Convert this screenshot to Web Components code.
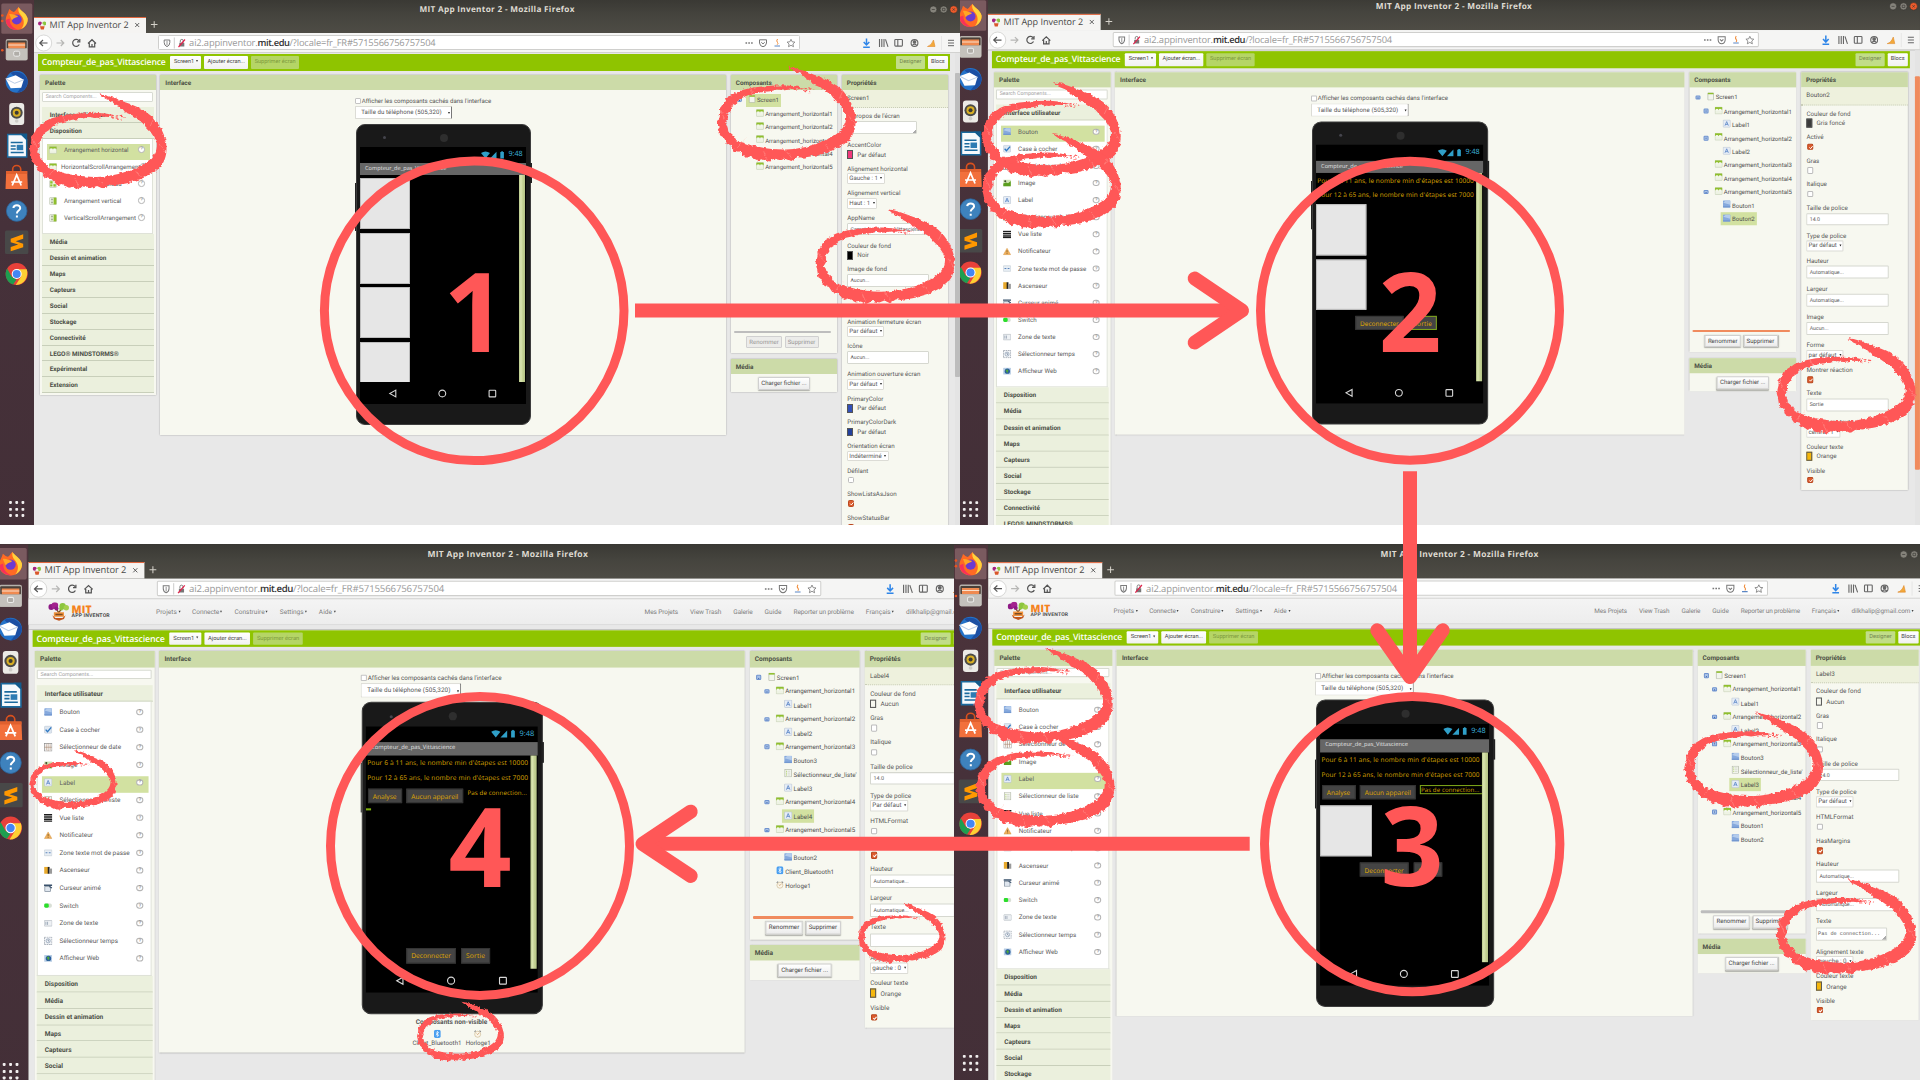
<!DOCTYPE html>
<html lang="fr">
<head>
<meta charset="utf-8">
<title>MIT App Inventor 2 - Compteur de pas</title>
<style>
html,body{margin:0;padding:0}
body{width:1920px;height:1080px;overflow:hidden;background:#fff;font-family:Roboto,"Liberation Sans",sans-serif;text-rendering:geometricPrecision}
</style>
</head>
<body>
<tutorial-board>
  <window-shot slot="top" w="960" x="0" y="0" scale="1" shot="1"></window-shot>
  <window-shot slot="top" w="960" x="-6.3" y="-3.2" scale="1.0065" shot="2"></window-shot>
  <window-shot slot="bottom" w="954" x="-6.7" y="0.4" scale="1.035" shot="4"></window-shot>
  <window-shot slot="bottom" w="966" x="-0.4" y="0.8" scale="1.018" shot="3"></window-shot>
  <step-overlay slot="over"></step-overlay>
</tutorial-board>
<script>
/* ---------- shared helpers ---------- */
const BASE = `*{box-sizing:border-box}:host{display:block;box-sizing:border-box}svg{display:block;flex:none}`;
const pen = document.createElement('canvas').getContext('2d');
// Spreads the letters of every [data-w] text so that it fills the given width.
function fit(root){
  root.querySelectorAll('[data-w]').forEach(el=>{
    const c=getComputedStyle(el);
    pen.font=`${c.fontWeight} 100px ${c.fontFamily}`;
    const nat=pen.measureText(el.textContent).width*parseFloat(c.fontSize)/100;
    el.style.letterSpacing=((+el.dataset.w-nat)/el.textContent.length).toFixed(3)+'px';
    el.style.whiteSpace='pre';
  });
}
function define(tag,css,tpl){
  customElements.define(tag,class extends HTMLElement{
    connectedCallback(){
      if(this.shadowRoot)return;
      const r=this.attachShadow({mode:'open'});
      r.innerHTML=`<style>${BASE}${css}</style>${tpl(this)}`;
      fit(r);
    }
  });
}

/* ---------- component icons (8x8) ---------- */
const G={
 harr:'<rect x=".4" y=".6" width="7.2" height="6.8" rx=".6" fill="#eef3e4" stroke="#b9c4a6" stroke-width=".5"/><rect x=".4" y=".6" width="7.2" height="2.6" fill="#8fbf2d"/><rect x="1.2" y="2.4" width="2.3" height="2" fill="#f4f7ee"/><rect x="4.4" y="2.4" width="2.3" height="2" fill="#f4f7ee"/>',
 varr:'<rect x=".6" y=".5" width="6.8" height="7" rx=".6" fill="#eef3e4" stroke="#b0b9a3" stroke-width=".5"/><rect x="4.6" y=".6" width="2.8" height="6.8" fill="#8fbf2d"/><rect x="2" y="1.6" width="2" height="1.7" fill="#a9b39a"/><rect x="2" y="4.6" width="2" height="1.7" fill="#a9b39a"/>',
 tab:'<rect x=".6" y=".5" width="6.8" height="7" rx=".6" fill="#eef3e4" stroke="#b0b9a3" stroke-width=".5"/><rect x="1.2" y="1.2" width="2.4" height="2.4" fill="#8fbf2d"/><rect x="4.4" y="4.2" width="2.4" height="2.4" fill="#8fbf2d"/><rect x="1.2" y="4.4" width="2.2" height="2" fill="#8fbf2d"/>',
 screen:'<rect x="1.3" y=".3" width="5.6" height="7.3" rx=".5" fill="#f3f5ee" stroke="#a9b09d" stroke-width=".6"/><rect x="1.3" y=".3" width="5.6" height="1.5" fill="#8fbf2d"/>',
 bouton:'<rect x=".3" y=".3" width="7.4" height="7" rx=".7" fill="#86a9dd"/><path d="M.5 2.5 3 .5h4.500v4z" fill="#b4ccec"/><rect x=".3" y="6" width="7.400" height="1.300" fill="#7398d0"/>',
 check:'<rect x=".5" y=".5" width="7" height="7" rx="1" fill="#dde6f0" stroke="#b7c3d2" stroke-width=".5"/><path d="M1.600 4 3.400 6 7 1.800" fill="none" stroke="#2e78c2" stroke-width="1.300"/>',
 date:'<rect x=".3" y=".3" width="7.400" height="7.400" fill="#fff" stroke="#8b8b8b" stroke-width=".7"/><path d="M4 .3v7.400M.3 4h7.400M2.200 1v6M5.900 1v6" stroke="#a98972" stroke-width=".6"/>',
 image:'<rect x=".3" y=".8" width="7.400" height="6.400" fill="#cfe3b4"/><path d="M.3 4.500 3 3.600 5 4.300 7.700 2v5.200H.3z" fill="#5a9e1e"/><circle cx="2.200" cy="2.200" r="1" fill="#3a4d2a"/>',
 label:'<rect x=".4" y=".4" width="7.200" height="7.200" rx=".8" fill="#e6edf6" stroke="#b4bfce" stroke-width=".6"/><path d="M2.300 6 4 2 5.700 6M2.900 4.800h2.200" fill="none" stroke="#5b86c7" stroke-width=".8"/>',
 liste:'<rect x=".8" y=".4" width="6.400" height="7.200" fill="#f4f6f0" stroke="#aab09f" stroke-width=".6"/><path d="M2 2.200h.8M2 4h.8M2 5.800h.8" stroke="#8fbf2d" stroke-width=".8"/><path d="M3.500 2.200H6M3.500 4H6M3.500 5.800H6" stroke="#c3c8ba" stroke-width=".6"/>',
 vue:'<path d="M0 1.200h8M0 3.400h8M0 5.600h8M0 7.500h8" stroke="#1c1c1c" stroke-width="1.500"/>',
 notif:'<path d="M4 .8 7.600 7.200H.4z" fill="#f0b05c" stroke="#cf8f3a" stroke-width=".4"/><path d="M4 2.800V5M4 5.600v.9" stroke="#7d5c2a" stroke-width=".8"/>',
 pass:'<rect x=".2" y="1.200" width="7.600" height="5.600" rx=".6" fill="#e8eef4" stroke="#b9c2cc" stroke-width=".5"/><path d="M1.500 4h1.800M4.600 4h1.800" stroke="#5a84bb" stroke-width="1"/>',
 asc:'<rect x=".2" y=".6" width="3.800" height="6.600" fill="#e8a92b"/><rect x="3.600" y=".6" width="1.800" height="6.600" fill="#222"/><rect x="5.400" y="2.200" width="2.400" height="5" fill="#9a9a9a"/>',
 curs:'<rect x=".8" y="2.600" width="5.600" height="4.800" fill="#dfe6ee" stroke="#6b7a8b" stroke-width=".6"/><path d="M0 1.300h8" stroke="#39506b" stroke-width="1.300"/><path d="M5 2.600 7.800 4" stroke="#39506b" stroke-width="1"/>',
 sw:'<rect x=".2" y="2" width="7.400" height="4" rx="1.600" fill="#d9dfd6"/><rect x=".2" y="2" width="4.400" height="4" rx="1.400" fill="#2ade2a"/>',
 zone:'<rect x=".2" y="1.400" width="7.600" height="5.400" rx=".5" fill="#eef1f4" stroke="#adb5bd" stroke-width=".6"/><path d="M1.800 2.600v3M3.400 2.600v3" stroke="#8796a8" stroke-width=".7"/>',
 temps:'<rect x=".3" y=".3" width="7.400" height="7.400" fill="#f2f4f7" stroke="#7d8794" stroke-width=".7" stroke-dasharray="1.600 .7"/><circle cx="4" cy="4" r="2" fill="none" stroke="#7a8fa8" stroke-width=".6"/><path d="M4 2.800V4l1 .6" stroke="#44597a" stroke-width=".6" fill="none"/>',
 web:'<rect x=".2" y=".6" width="7.600" height="6.600" rx=".5" fill="#b7cde4"/><circle cx="4.300" cy="4" r="2.600" fill="#2c5f9e"/><path d="M2.600 3.200 4.200 2 5.400 3.600 4.300 6z" fill="#4fa53a"/>',
 bt:'<rect x=".8" y="0" width="6.400" height="7.800" rx="1.600" fill="#4a9ff0"/><path d="M2.600 2.600 5.300 5.100 4 6.500V1.400L5.300 2.700 2.600 5.200" fill="none" stroke="#fff" stroke-width=".7"/>',
 clock:'<circle cx="4" cy="4.300" r="2.900" fill="#fbf6ea" stroke="#c9b48c" stroke-width=".6"/><path d="M.9 1.900 2.300.8M7.100 1.900 5.700.8" stroke="#8b8b8b" stroke-width="1"/><path d="M2.900 3.600 4 4.600 5.400 3" stroke="#c08b4d" stroke-width=".6" fill="none"/>'
};
const ico=(n,s=8)=>`<svg width="${s}" height="${s}" viewBox="0 0 8 8">${G[n]}</svg>`;

/* ---------- content of the four steps ---------- */
const CATS=['Disposition','Média','Dessin et animation','Maps','Capteurs','Social','Stockage','Connectivité','LEGO® MINDSTORMS®','Expérimental','Extension'];
const UI=[['bouton','Bouton'],['check','Case à cocher'],['date','Sélectionneur de date'],['image','Image'],['label','Label'],['liste','Sélectionneur de liste'],['vue','Vue liste'],['notif','Notificateur'],['pass','Zone texte mot de passe'],['asc','Ascenseur'],['curs','Curseur animé'],['sw','Switch'],['zone','Zone de texte'],['temps','Sélectionneur temps'],['web','Afficheur Web']];
const LAY=[['harr','Arrangement horizontal'],['harr','HorizontalScrollArrangement'],['tab','Arrangement tableau'],['varr','Arrangement vertical'],['varr','VerticalScrollArrangement']];
const ah=n=>`Arrangement_horizontal${n}`;
const T1="Pour 6 à 11 ans, le nombre min d'étapes est 10000",T2="Pour 12 à 65 ans, le nombre min d'étapes est 7000";
// property kinds: a, m = text area, c = colour, s = select, i = input, b = check box
const LBL=[['c','Couleur de fond','Aucun','transparent'],['b','Gras',0],['b','Italique',0],['i','Taille de police','14.0'],['s','Type de police','Par défaut'],['b','HTMLFormat',0],['b','HasMargins',1],['i','Hauteur','Automatique...'],['i','Largeur','Automatique...']];
const END=[['c','Couleur texte','Orange','#f5b70c'],['b','Visible',1]];
const lines=`<p style="margin-top:.4px"><span data-w="155.7">${T1}</span></p><p><span data-w="155.7">${T2}</span></p>`;
const SHOT={
 1:{open:1,sel:0,thumb:['#bdbdbd',19.3,304],bar:'#bdbdbd',off:1,h:344.500,
    tree:[[0,'screen','Screen1',1,1],[1,'harr',ah(1)],[1,'harr',ah(2)],[1,'harr',ah(3)],[1,'harr',ah(4)],[1,'harr',ah(5)]],
    name:'Screen1',props:[['a',"À propos de l'écran",''],['c','AccentColor','Par défaut','#f0397b'],['s','Alignement horizontal','Gauche : 1'],['s','Alignement vertical','Haut : 1'],['i','AppName','Compteur_de_pas_Vittascience'],['c','Couleur de fond','Noir','#000'],['i','Image de fond','Aucun...'],['gap'],['s','Animation fermeture écran','Par défaut'],['i','Icône','Aucun...'],['s','Animation ouverture écran','Par défaut'],['c','PrimaryColor','Par défaut','#3350b8'],['c','PrimaryColorDark','Par défaut','#24419c'],['s','Orientation écran','Indéterminé'],['b','Défilant',0],['b','ShowListsAsJson',1],['b','ShowStatusBar',1]],
    phone:'<div style="padding:3.300px 0 0 .5px;display:flex;flex-direction:column;gap:3.800px"><i class="box"></i><i class="box"></i><i class="box"></i><i class="box"></i></div>'},
 2:{open:0,sel:0,thumb:['#f08b5e',25.5,391],bar:'#f08b5e',h:344.500,
    tree:[[0,'screen','Screen1',1],[1,'harr',ah(1),1],[2,'label','Label1'],[1,'harr',ah(2),1],[2,'label','Label2'],[1,'harr',ah(3)],[1,'harr',ah(4)],[1,'harr',ah(5),1],[2,'bouton','Bouton1'],[2,'bouton','Bouton2',0,1]],
    name:'Bouton2',props:[['c','Couleur de fond','Gris foncé','#3b3b3b'],['b','Activé',1],['b','Gras',0],['b','Italique',0],['i','Taille de police','14.0'],['s','Type de police','Par défaut'],['i','Hauteur','Automatique...'],['i','Largeur','Automatique...'],['i','Image','Aucun...'],['s','Forme','par défaut'],['b','Montrer réaction',1],['i','Texte','Sortie'],['s','Alignement texte','centre : 1'],...END],
    phone:`${lines}<i class="box" style="margin:1.800px 0 4px .5px;height:50.400px"></i><i class="box" style="margin:0 0 6px .5px;height:50px"></i><div class="row" style="padding-left:39.200px;gap:5px"><b style="width:48.600px"><span data-w="38.500">Deconnecter</span></b><b class="on" style="width:27.500px"><span data-w="18.700">Sortie</span></b></div>`},
 3:{open:0,sel:4,menu:1,thumb:['#bdbdbd',48,300],bar:'#bdbdbd',h:344.500,
    tree:[[0,'screen','Screen1',1],[1,'harr',ah(1),1],[2,'label','Label1'],[1,'harr',ah(2),1],[2,'label','Label2'],[1,'harr',ah(3),1],[2,'bouton','Bouton3'],[2,'liste',"Sélectionneur_de_liste'"],[2,'label','Label3',0,1],[1,'harr',ah(4)],[1,'harr',ah(5),1],[2,'bouton','Bouton1'],[2,'bouton','Bouton2']],
    name:'Label3',props:[...LBL,['m','Texte','Pas de connection...'],['s','Alignement texte','gauche : 0'],...END],
    phone:`${lines}<div class="row" style="margin-top:2.700px;padding-left:2.100px;gap:4.200px;align-items:flex-start"><b style="width:33px"><span data-w="23">Analyse</span></b><b style="width:55.600px"><span data-w="45.500">Aucun appareil</span></b><em class="on" style="width:62px"><span data-w="57.500">Pas de connection...</span></em></div><i class="box" style="margin:5.500px 0 5.900px .9px;height:49.900px"></i><div class="row" style="padding-left:39.200px;gap:5px"><b style="width:48.600px"><span data-w="38.500">Deconnecter</span></b><b style="width:27.500px"><span data-w="18.700">Sortie</span></b></div>`},
 4:{open:0,sel:4,menu:1,thumb:['#bdbdbd',48,300],bar:'#f08b5e',h:372.300,hidden:1,
    tree:[[0,'screen','Screen1',1],[1,'harr',ah(1),1],[2,'label','Label1'],[1,'harr',ah(2),1],[2,'label','Label2'],[1,'harr',ah(3),1],[2,'bouton','Bouton3'],[2,'liste',"Sélectionneur_de_liste'"],[2,'label','Label3'],[1,'harr',ah(4),1],[2,'label','Label4',0,1],[1,'harr',ah(5),1],[2,'bouton','Bouton1'],[2,'bouton','Bouton2'],[1,'bt','Client_Bluetooth1'],[1,'clock','Horloge1']],
    name:'Label4',props:[...LBL,['a','Texte',''],['s','Alignement texte','gauche : 0'],...END],
    phone:`${lines}<div class="row" style="margin-top:2.700px;padding-left:2.100px;gap:4.200px;align-items:flex-start"><b style="width:33px"><span data-w="23">Analyse</span></b><b style="width:55.600px"><span data-w="45.500">Aucun appareil</span></b><em style="width:62px"><span data-w="57.500">Pas de connection...</span></em></div><i style="width:5px;height:2px;background:#7fb010;margin:5px 0 0 .8px"></i><div class="row" style="margin-top:auto;margin-bottom:5.600px;padding-left:39.200px;gap:5px"><b style="width:48.600px"><span data-w="38.500">Deconnecter</span></b><b style="width:27.500px"><span data-w="18.700">Sortie</span></b></div>`}
};

/* ---------- panel with a title ---------- */
define('side-panel',`:host{background:#f7f8f0;box-shadow:0 0 1.600px rgba(0,0,0,.32)}
 header{height:15.200px;background:#ccdba8;padding-left:5px;font:bold 6.350px/16.600px Roboto,sans-serif;color:#4b4f45}`,
 el=>`<header>${el.getAttribute('label')}</header><slot></slot>`);

/* ---------- palette ---------- */
define('component-palette',`
 .in{padding:2.200px 2px 1.600px}
 .search{height:9.200px;background:#fff;border:.6px solid #d8dbd2;border-radius:1px;font-size:5.200px;line-height:8.400px;color:#a3a3a3;padding-left:2.600px;margin-right:.6px;margin-bottom:5.800px}
 .cat{height:15.900px;background:#ebf0dd;border-bottom:1px solid #c8cfba;font-weight:bold;font-size:6.350px;line-height:17.600px;color:#4a4d45;padding-left:7.700px}
 .list{background:#fff;padding:4.400px 1.700px 4.800px 4px;margin-right:.6px;border:0 solid #dfe2d8;border-width:0 .6px .6px}
 .it{height:17px;display:flex;align-items:flex-start}
 .it div{height:16.200px;flex:1;display:flex;align-items:flex-start;padding:2.200px 5.500px 0 2.300px;font-size:6.180px;line-height:8px;color:#5d5d5d}
 .it div.sel{background:#d2e1a1}
 .it span{flex:1;margin-left:6.600px;white-space:nowrap}
 .q{width:6.400px;height:6.400px;border:.6px solid #b5b5b5;border-radius:50%;background:#fff;font-size:4.600px;line-height:5.400px;text-align:center;color:#666;font-style:normal;margin-top:.8px}`,
 el=>{
  const s=SHOT[el.getAttribute('shot')],items=s.open?LAY:UI;
  const list=`<div class="list">${items.map((i,n)=>`<div class="it"><div class="${n===s.sel?'sel':''}">${ico(i[0])}<span ${i[1].startsWith('Horiz')?'style="margin-left:3.600px"':''}>${i[1]}</span><i class="q">?</i></div></div>`).join('')}</div>`;
  const cats=['Interface utilisateur',...CATS];
  return `<side-panel label="Palette"><div class="in"><div class="search">Search Components...</div>${cats.map((c,n)=>`<div class="cat">${c}</div>${n===s.open?list:''}`).join('')}</div></side-panel>`;
 });

/* ---------- phone ---------- */
define('phone-preview',`
 :host{width:174.800px;height:301.800px;background:#191919;border-radius:9px;padding:0 4.700px 0 2.600px;display:flex;flex-direction:column;position:relative;border:.6px solid #3d3d3d}
 .side{position:absolute;width:1.800px;background:#222}
 .top{height:22.800px;flex:none;display:flex;align-items:center;padding:4px 0 0 23.500px}
 .top i{width:3px;height:3px;border-radius:50%;background:#45454d}
 .top u{width:8px;height:8px;border-radius:50%;background:#2e2e2e;margin-left:54px}
 .scr{height:257px;width:166.500px;background:#000;display:flex;flex-direction:column}
 .st{height:15.200px;display:flex;justify-content:flex-end;align-items:center;padding-right:3.400px;gap:3px;color:#3cb0da;font:7.200px/15px "Open Sans",sans-serif}
 .tt{height:12.600px;background:#666;color:#e4e4e4;font:5.600px/11.800px "Open Sans",sans-serif;padding-left:5.500px}
 .body{height:206.800px;display:flex}
 .main{width:159.500px;overflow:hidden;display:flex;flex-direction:column}
 .strip{width:6.300px;background:linear-gradient(90deg,#b9c98a,#dbe6b2 30%,#c6d496 60%,#b3c285)}
 .box{display:block;flex:none;width:50.300px;height:50.700px;background:#e6e6e6;border:.6px solid #bdbdbd}
 p{margin:0;height:14.500px;padding-left:1.800px;font:6.400px/14.500px "Open Sans",sans-serif;color:#d9a400;flex:none}
 .row{display:flex;flex:none}
 b{height:14.600px;background:#444;color:#e0ab00;font:6.400px/13.600px "Open Sans",sans-serif;text-align:center;border:.6px solid #333;flex:none}
 em{height:9.600px;font:6px/8.800px "Open Sans",sans-serif;color:#d9a400;overflow:hidden;flex:none;padding-left:.5px;margin-left:-1px}
 .on{border:.9px solid #7fa81a}
 .nav{display:flex;height:22.400px;justify-content:center}`,
 el=>`<i class="side" style="left:-2.300px;top:58px;height:48px"></i><i class="side" style="right:-1.800px;top:38px;height:20px"></i>
 <div class="top"><i></i><u></u></div>
 <div class="scr"><div class="st"><svg width="24" height="8" viewBox="0 0 24 8" fill="#2f9fc8"><path d="M0 2Q4.500-1 9 2L4.500 7.500zM15.500 7.500h-6.500L15.500.8zM19.300 1h1v-.8h1.600V1h1v6.500h-3.600z"/></svg><span>9:48</span></div>
 <div class="tt"><span data-w="81.500">Compteur_de_pas_Vittascience</span></div>
 <div class="body"><div class="main">${SHOT[el.getAttribute('shot')].phone}</div><div class="strip"></div></div>
 <div class="nav"><svg width="120" height="22" viewBox="-59.300 -11.500 120 22" fill="none" stroke="#d8d8d8" stroke-width="1.100"><path d="M-46.500-3.400v6.800L-52.500 0z"/><circle r="3.400"/><rect x="46.800" y="-3.200" width="6.600" height="6.600" rx=".7"/></svg></div></div>`);

/* ---------- designer view ---------- */
define('designer-view',`
 .b{padding:6.300px 0 0 194.900px;font-size:6.100px;color:#555}
 .c{display:flex;align-items:center;height:9.500px;gap:.8px}
 .c i{width:5.700px;height:5.700px;border:.7px solid #c4c4c4;background:#fff;border-radius:1px;margin-top:-1px}
 .s{width:97px;height:13.200px;background:#fff;border:.6px solid #dcdcd6;border-right:1.300px solid #777;border-radius:1px;display:flex;align-items:center;padding:0 1.500px 0 5px;justify-content:space-between}
 .s u{width:0;height:0;border:1.600px solid transparent;border-top:2.400px solid #222;margin-top:2px}
 phone-preview{margin:4.400px 0 0 .7px}
 .n{width:175px;display:flex;flex-direction:column;align-items:center;padding-top:3.300px}
 .n strong{font-size:6.350px;line-height:9px}
 .n div{display:flex;margin-top:2.500px;gap:4px}
 .n div span{display:flex;flex-direction:column;align-items:center;font-size:6px;line-height:9px;gap:1.500px}`,
 el=>{const s=SHOT[el.getAttribute('shot')];return `<side-panel label="Interface" style="height:${s.h+15.2}px"><div class="b"><div class="c"><i></i><span data-w="129">Afficher les composants cachés dans l'interface</span></div><div class="s"><span data-w="80.500">Taille du téléphone (505,320)</span><u></u></div><phone-preview shot="${el.getAttribute('shot')}"></phone-preview>${s.hidden?`<div class="n"><strong>Composants non-visible</strong><div><span>${ico('bt')}<a data-w="47.500">Client_Bluetooth1</a></span><span>${ico('clock')}<a data-w="24">Horloge1</a></span></div></div>`:''}</div></side-panel>`});

/* ---------- component tree and media ---------- */
define('component-tree',`
 :host{display:flex;flex-direction:column;gap:5.100px}
 .t{height:240.600px;padding-top:3.300px;overflow:hidden}
 .r{height:13.400px;display:flex;align-items:center;font-size:6.020px;color:#4f4f4f;white-space:nowrap}
 .k{width:4.600px;height:4.600px;border-radius:1.200px;background:#a9c2e6;border:.6px solid #6f93cf;margin-right:5.400px;display:block;position:relative;flex:none}
 .k::after{content:"";display:block;height:.8px;background:#3a62ad;margin:1.200px .6px}
 .k.no{visibility:hidden}
 .v{display:flex;align-items:center;height:13px;padding:0 2.200px 0 2.500px;gap:1px}
 .v svg{margin-top:-2px}.v span{margin-top:1.600px}
 .sel{background:#d2e1a1}
 .bar{height:2.300px;margin:0 6px 0 3.300px;border-radius:1px}
 .bt{display:flex;justify-content:center;gap:2.800px;padding:2.800px 3px 5px 0}
 .bt b{font-weight:normal;font-size:6px;color:#444;background:linear-gradient(#fff,#ececec);border:.6px solid #d0d0d0;border-radius:1px;box-shadow:0 .8px 1.200px rgba(0,0,0,.3);height:12.600px;line-height:11.600px;text-align:center}
 .off b{color:#969696;background:#ececea;box-shadow:none}
 .bt.m{padding:3.200px 0 2.800px}`,
 el=>{const s=SHOT[el.getAttribute('shot')];return `<side-panel label="Composants"><div class="t">${s.tree.map(r=>`<div class="r" style="padding-left:${6.200+r[0]*8.100}px"><i class="k ${r[3]?'':'no'}"></i><div class="v ${r[4]?'sel':''}" style="margin-left:-1.400px">${ico(r[1])}<span>${r[2]}</span></div></div>`).join('')}</div><div class="bar" style="background:${s.bar}"></div><div class="bt ${s.off?'off':''}"><b style="width:35.500px">Renommer</b><b style="width:34px">Supprimer</b></div></side-panel>
 <side-panel label="Média"><div class="bt m"><b style="width:52px">Charger fichier ...</b></div></side-panel>`});

/* ---------- properties ---------- */
define('property-list',`
 .nm{height:17.400px;background:#eef1dd;border-bottom:.6px dotted #c9cdb8;padding-left:5.300px;font-size:6.200px;line-height:16.600px;color:#555}
 .p{padding:4.300px 0 0 4.900px;font-size:6.220px;color:#5a5a5a}
 .p>div{white-space:nowrap;overflow:hidden}
 label{display:block;height:8px;line-height:8px;padding-left:.5px}
 .k-c{height:23.600px}.k-s{height:24.500px}.k-i{height:28px}.k-b{height:23.500px}.k-a,.k-m{height:29.300px}.gap{height:24.500px}
 .sw{display:flex;align-items:center;height:11px;gap:4.600px}
 .sw i{width:6px;height:8.600px;border:.8px solid #555}
 .se{display:inline-block;height:10.800px;line-height:9.800px;background:#fff;border:.6px solid #dcdcd6;border-radius:1px;padding:0 1.300px 0 1.600px;margin-top:.5px;font-size:6.100px}
 .se u{display:inline-block;width:0;height:0;border:1.400px solid transparent;border-top:2.200px solid #222;border-bottom:0;margin-left:1px;position:relative;top:-1px}
 .in{width:82.500px;height:12.400px;background:#fff;border:.6px solid #d6d8d0;border-radius:1px;font-size:5.200px;line-height:12px;padding-left:2.800px;margin-top:.9px;overflow:hidden}
 .ta{width:70px;height:13px;background:linear-gradient(135deg,transparent 0 95%,#aaa 95%) #fff;border:.6px solid #d6d8d0;border-radius:1px;margin-top:1.600px;font:5.100px/11.500px "Liberation Mono",monospace;padding-left:1.500px}
 .cb{display:block;width:6.200px;height:6.200px;border-radius:1.400px;border:.7px solid #bcbcbc;background:#fff;margin:2.400px 0 0 1.300px}
 .cb.on{background:#dc5b2d;border-color:#b9481f}.cb.on svg{margin:-.3px}`,
 el=>{
  const s=SHOT[el.getAttribute('shot')];
  const v=p=>({
   c:()=>`<div class="sw"><i style="background:${p[3]}"></i>${p[2]}</div>`,
   s:()=>`<span class="se">${p[2]} <u></u></span>`,
   i:()=>`<div class="in">${p[2]}</div>`,
   a:()=>`<div class="ta"></div>`,
   m:()=>`<div class="ta"><span data-w="61">${p[2]}</span></div>`,
   b:()=>`<i class="cb ${p[2]?'on':''}">${p[2]?'<svg width="5.400" height="5.400" viewBox="0 0 6 6"><path d="M1.300 2.900 2.600 4.300 4.900 1.600" fill="none" stroke="#fff" stroke-width="1.100"/></svg>':''}</i>`
  })[p[0]]();
  return `<side-panel label="Propriétés"><div class="nm">${s.name}</div><div class="p">${s.props.map(p=>p[0]==='gap'?'<div class="gap"></div>':`<div class="k-${p[0]}"><label>${p[1]}</label>${v(p)}</div>`).join('')}</div></side-panel>`;
 });

/* ---------- Ubuntu launcher ---------- */
define('ubuntu-dock',`
 :host{width:34.100px;background:linear-gradient(#4d343b,#46313a 40%,#432f37);flex:none}`,
 ()=>`<svg width="34" height="570" viewBox="0 0 34 570">
 <rect x="1.300" y="3.400" width="31" height="30.400" rx="1.500" fill="#7a5a5f"/>
 <g fill="#e95420"><circle cx="2.300" cy="15.500" r="1.300"/><circle cx="2.300" cy="21" r="1.300"/><circle cx="2.300" cy="50.300" r="1.300"/></g>
 <g transform="translate(16.700 18.500)"><path d="M-11 1.500C-11-3-8.500-5-7.500-9.500-5.500-8-4.500-7-3-6.500-1-7-.5-9.500 2-11.500 2.500-8.500 9-6 11 0 11.500 7 6 11.500 0 11.500-6 11.500-11 7.500-11 1.500z" fill="#ff6a24"/><path d="M2-11.500C2.500-8.500 9.500-6 11 0 11.500 5 8 9 4.500 10.500 8.500 6 7.500 0 4-3.500 2-5.500 1-8.500 2-11.500z" fill="#ffd23c"/><path d="M-11 1.500C-10.500 8-5 11.800 1.500 11.400-4.500 9.500-7.500 5-7 0z" fill="#f7325a"/><circle cy="1" r="5" fill="#6a3bd0"/><path d="M-7.500-4.500C-4-5-1.500-3 1.500-2.500-.5-.5-3-1-4.800 2z" fill="#ffa624"/></g>
 <g transform="translate(16.700 50)"><rect x="-11" y="-11" width="22" height="21.500" rx="2" fill="#b5b1ab"/><rect x="-10" y="-9.500" width="20" height="8" rx="1" fill="#4a4039"/><path d="M-8.500-7.500h17v6h-17z" fill="#f08a50"/><path d="M-8.500-5h17" stroke="#f9dfcb" stroke-width="1"/><rect x="-10.500" y="-1.500" width="21" height="11.500" rx="1" fill="#c4c1bc"/><rect x="-3" y="1.200" width="6" height="5" rx="1.500" fill="#b0ada8" stroke="#ececea" stroke-width="1"/></g>
 <g transform="translate(16.700 81.800)"><circle r="11" fill="#2472c8"/><path d="M-6-9C0-12 9-9 11-1 11 6 6 11 0 11 6 6 7-2 1-5-2-6-4-6-6-9z" fill="#1b4fa3"/><path d="M-11-3-1-6.500 7-2 4.500 6-6 6.500z" fill="#fff"/><path d="M-11-3-2 1.500 7-2" fill="none" stroke="#b9cde6" stroke-width="1"/></g>
 <g transform="translate(16.700 114)"><rect x="-7.500" y="-11" width="15" height="22" rx="3" fill="#eceae6"/><circle cy="-1.300" r="6" fill="#4b4b49"/><circle cy="-1.300" r="4" fill="#d8ae24"/><circle cy="-1.300" r="2" fill="#3c3a34"/><circle cy="7" r="1.800" fill="#cfcdc8"/></g>
 <g transform="translate(16.700 146)"><path d="M-9-11.500H5L10-6.500V11H-9z" fill="#f6f9fc" stroke="#1b6a9e" stroke-width="1.500"/><path d="M3-12.500h7.500v7z" fill="#125a8c"/><path d="M-6-3.500H6M-6 0h5M-6 3h5M-6 6.500H7" stroke="#1b6a9e" stroke-width="1.600"/><rect x="0" y="-1.200" width="6.500" height="5.400" fill="#2d7bb3"/></g>
 <g transform="translate(16.700 178.500)"><path d="M-4-6.500v-3a4 3.500 0 0 1 8 0v3" fill="none" stroke="#d9501d" stroke-width="1.600"/><path d="M-10.500-7.500h21L11.200 10.500H-11.200z" fill="#f2703c"/><path d="M-10.500-7.500h21v3h-21z" fill="#e0602e"/><path d="M-4.500 7 0-3.500 4.500 7M-5.500 3.500h11" fill="none" stroke="#fff" stroke-width="1.700"/></g>
 <g transform="translate(16.700 211)"><circle r="10.300" fill="#3e82bd" stroke="#2c659b" stroke-width=".8"/><path d="M-3.300-3C-3-6.600 3.600-6.700 3.500-2.800 3.400-.5.200-.4.200 2.400M.2 4.600v2" fill="none" stroke="#fff" stroke-width="2"/></g>
 <g transform="translate(16.700 242.300)"><rect x="-11.700" y="-11.700" width="23.400" height="23.400" rx="1.500" fill="#484848"/><path d="M-6-3.500 6.500-8v4.500L-1-1 6.500 1.500V5L-6 9V4.800L1.500 2.300-6 0z" fill="#ff9800"/></g>
 <g transform="translate(16.700 274)"><circle r="11" fill="#e8413a"/><path d="M-9.500-5.500-5 2.700-.2 5.500-3.500 10.500C-10.500 8.500-13 0-9.500-5.500z" fill="#1e9e50"/><path d="M0-4.700H10C12.500 3 7 11.500-1 11L4.500 2.500z" fill="#fdd033"/><circle r="5" fill="#fff"/><circle r="4" fill="#4486f4"/></g>
 <g fill="#f1eeee">${[502.500,509.300,515.500].map(y=>[10.500,16.700,22.900].map(x=>`<rect x="${x-1.4}" y="${y-1.4}" width="2.800" height="2.800" rx=".8"/>`).join('')).join('')}</g></svg>`);

/* ---------- browser chrome ---------- */
define('browser-chrome',`
 .ti{height:32.800px;background:linear-gradient(#3a3934,#45443e 45%,#4e4c45);display:flex;flex-direction:column}
 .r1{height:17px;display:grid;grid-template-columns:1fr auto 1fr;align-items:center;padding-top:1.600px}
 .r1 span{font:bold 8.200px/15px "Open Sans",sans-serif;color:#dfdbd2}
 .r1 svg{justify-self:end}
 .r2{flex:1;display:flex}
 .tab{width:111.800px;background:#f5f4f2;border-top:1px solid #e0673f;display:flex;align-items:center;padding-left:3.800px;font:9px/14px "Open Sans",sans-serif;color:#4a4a48}
 .tab span{margin-left:3.200px}
 .tb{height:20.600px;background:#f5f5f4;border-bottom:.7px solid #d2d2d0;display:flex;align-items:center}
 .url{width:641.500px;height:14.900px;background:#fff;border:.6px solid #cfcfcd;border-radius:1.500px;display:flex;align-items:center;font:9.300px/14px "Open Sans",sans-serif;color:#999;flex:none}
 .url b{font-weight:600;color:#333}
 .url .sp{flex:1}`,
 ()=>`<div class="ti"><div class="r1"><i></i><span data-w="155.500">MIT App Inventor 2 - Mozilla Firefox</span><svg width="30" height="9" viewBox="0 0 30 9"><g stroke="#33322e" stroke-width=".6"><circle cx="3.300" cy="4.500" r="3.600" fill="#85837b"/><circle cx="13.700" cy="4.500" r="3.600" fill="#85837b"/><circle cx="23.700" cy="4.500" r="3.800" fill="#ee5a2a"/></g><path d="M1.800 4.500h3M12.400 3.300h2.600v2.400h-2.600zM22.500 3.300l2.400 2.400M24.900 3.300l-2.400 2.400" stroke="#3c3b37" stroke-width=".7" fill="none"/></svg></div>
 <div class="r2"><div class="tab"><svg width="8.500" height="9" viewBox="0 0 8.500 9"><circle cx="2" cy="2.500" r="2" fill="#a6217f"/><circle cx="6.300" cy="2.600" r="2" fill="#8bc53f"/><circle cx="4.200" cy="3.800" r="1.300" fill="#f3eee9"/><path d="M2 5.200h4.600L5.800 8.400H2.800z" fill="#d9572a"/></svg><span data-w="79">MIT App Inventor 2</span><svg width="16" height="8" viewBox="0 0 16 8"><path d="M6.200 2l4 4M10.200 2l-4 4" stroke="#555" stroke-width=".9"/></svg></div><svg width="18" height="15" viewBox="0 0 18 15"><path d="M8.200 4.200v6.600M4.900 7.500h6.600" stroke="#d5d2ca" stroke-width="1"/></svg></div></div>
 <div class="tb"><svg width="124" height="20" viewBox="34 33 124 20" fill="none" stroke="#555" stroke-width="1.200"><circle cx="43.700" cy="43" r="8" fill="#fff" stroke="#cacac8" stroke-width=".7"/><path d="M40 43h7.500M43 40l-3.200 3 3.200 3"/><path d="M56.500 43H63.500M60.800 40l3 3-3 3" stroke="#b7b7b5"/><path d="M79 40.800A3.500 3.500 0 1 0 79.300 44.500M79.800 39v2.800H77"/><path d="M88 43.500l4-3.800 4 3.800M89.300 43v3.800h5.400V43M92 46.800V44"/></svg>
 <div class="url"><svg width="30" height="14" viewBox="158 36 30 14" fill="none"><path d="M163.200 40h5.600v2.500q0 3-2.800 4.200-2.800-1.200-2.800-4.200z" stroke="#7b7b7b" stroke-width="1"/><path d="M166 41v4.300" stroke="#7b7b7b" stroke-width=".8"/><path d="M173.300 37.500v11" stroke="#aaa" stroke-width=".6"/><path d="M178.300 42.800h5v3.700h-5z" fill="#777"/><path d="M179.300 42.500v-1.600a1.500 1.500 0 0 1 3 0v1.600" stroke="#777" stroke-width=".9"/><path d="M177.500 47l6.500-7.500" stroke="#e3224b" stroke-width="1.200"/></svg><span data-w="68.500">ai2.appinventor.</span><b data-w="32">mit.edu</b><span data-w="146">/?locale=fr_FR#5715566756757504</span><i class="sp"></i>
 <svg width="56" height="14" viewBox="744 36 56 14" fill="none" stroke="#777" stroke-width="1"><path d="M746.500 43h1.600M749.300 43h1.600M752.100 43h1.600" stroke-width="1.500"/><path d="M760.500 39.800h7v3.200q-.6 3.500-3.500 3.700-2.900-.2-3.500-3.700zM762.300 42.300l1.700 1.600 1.700-1.600"/><path d="M778.500 39q-1.500 2 0 3.500 1 1-.3 2.200" stroke="#f08c3a"/><path d="M775.500 46h5.500" stroke="#5a86c4"/><path d="M792 39.300l1.200 2.500 2.700.3-2 1.900.6 2.700-2.500-1.400-2.500 1.400.6-2.700-2-1.900 2.700-.3z" stroke-width=".8"/></svg></div>
 <svg width="160" height="20" viewBox="799.500 33 160 20" fill="none" stroke="#666" stroke-width="1.100"><path d="M866 38.500v6M863.200 42l2.800 3 2.800-3M862.700 47.200h6.600" stroke="#2f86e8" stroke-width="1.500"/><path d="M879 39v8M881.300 39v8M883.500 39v8M885 39.300l2.500 7.500"/><rect x="894.300" y="39.500" width="7.600" height="6.600" rx=".8"/><path d="M897.300 39.500v6.600"/><circle cx="914" cy="43" r="3.400"/><circle cx="914" cy="42" r="1.300" fill="#666"/><path d="M911.700 45.500q2.300-2.400 4.600 0" /><path d="M927 46.500q4-1 6-6.500l1.500 6.500z" fill="#f3a93a" stroke="#e08a2c" stroke-width=".6"/><path d="M941 36v14" stroke="#ddd" stroke-width=".6"/><path d="M947.500 40.300h6M947.500 43h6M947.500 45.700h6" stroke-width="1"/></svg></div>`);

/* ---------- App Inventor menu ---------- */
define('inventor-menu',`
 :host{height:28.500px;padding-bottom:3.500px;background:#e8e8e8}
 .m{height:25px;background:linear-gradient(#f4f4f4,#ededed);border-bottom:.6px solid #dcdcdc;display:flex;align-items:center;padding-left:19px;font-size:6.300px;color:#808080}
 .lg{display:flex;flex-direction:column;margin-left:2px;width:81.600px;color:#4d4d4d}
 .lg b{font:800 10px/9.200px "Open Sans",sans-serif;color:#f58220}
 .lg strong{font:bold 5px/5.500px Roboto,sans-serif}
 .a,.z{display:flex;gap:11.500px}
 .z{margin-left:auto;gap:11.700px;padding-right:17px}
 span{white-space:nowrap}i{display:inline-block;width:0;height:0;border:1.400px solid transparent;border-top:2.200px solid #444;border-bottom:0;position:relative;top:-1px;margin-left:1.200px}`,
 ()=>`<div class="m"><svg width="20.500" height="18" viewBox="0 0 20.500 18"><circle cx="3" cy="4.500" r="2.800" fill="#8e1a86"/><circle cx="6.500" cy="3.200" r="3.200" fill="#a3228f"/><circle cx="8" cy="6" r="2" fill="#8e1a86"/><circle cx="14" cy="3.700" r="3.100" fill="#8cc63f"/><circle cx="17.500" cy="5.200" r="2.600" fill="#a5cf4c"/><circle cx="12.500" cy="6.200" r="1.800" fill="#8cc63f"/><path d="M8.500 7.500 10.300 10 12 7.500" stroke="#7a4a22" stroke-width="1.200" fill="none"/><path d="M5.500 9.500h9.800v4.500H5.500z" fill="#f0913a"/><path d="M4 12.500l3 2.500h6.800l3-2.500-1.500 3.500-4.800 1.800-4.800-1.800z" fill="#c2561e"/><path d="M7 11.700h7" stroke="#7a4a22" stroke-width="1.300"/></svg>
 <div class="lg"><b data-w="19.500">MIT</b><strong data-w="37">APP INVENTOR</strong></div>
 <div class="a"><div><span data-w="20.200">Projets</span><i></i></div><div><span data-w="26.200">Connecte</span><i></i></div><div><span data-w="29.200">Construire</span><i></i></div><div><span data-w="23">Settings</span><i></i></div><div><span data-w="12.800">Aide</span><i></i></div></div>
 <div class="z"><span data-w="32.200">Mes Projets</span><span data-w="30.300">View Trash</span><span data-w="18.500">Galerie</span><span data-w="16.300">Guide</span><span data-w="58.200">Reporter un problème</span><div><span data-w="24">Français</span><i></i></div><div><span data-w="58">dilkhalip@gmail.com</span><i></i></div></div></div>`);

/* ---------- green project bar ---------- */
define('project-bar',`
 :host{width:912.300px;height:16.500px;background:#8fc400;display:flex;align-items:center;padding:0 2px 0 4px;font-size:5.600px;color:#444}
 strong{font:600 8.600px/16px "Open Sans",sans-serif;color:#fff;margin-right:4.300px}
 b{font-weight:normal;background:linear-gradient(#fff,#f1f1f1);border-radius:1px;height:12.400px;line-height:12.300px;text-align:center;margin-right:2.500px}
 b.o{background:#b5d566;color:#7d9a3d}b.d{background:#c1dd88;color:#74864f;margin-left:auto;margin-right:3px}
 b:last-child{margin-right:0}u{display:inline-block;width:0;height:0;border:1.400px solid transparent;border-top:2.200px solid #333;border-bottom:0;position:relative;top:-.9px}`,
 ()=>`<strong data-w="124">Compteur_de_pas_Vittascience</strong><b style="width:31.500px">Screen1 <u></u></b><b style="width:44.500px">Ajouter écran...</b><b class="o" style="width:48.300px">Supprimer écran</b><b class="d" style="width:28.200px">Designer</b><b style="width:20.500px">Blocs</b>`);

/* ---------- one captured desktop ---------- */
define('window-shot',`
 :host{overflow:hidden;background:#383733;height:100%;flex:none}
 .w{width:960px;height:570px;display:flex;transform-origin:0 0}
 .m{flex:1;display:flex;flex-direction:column}
 .pg{flex:1;display:flex;background:#e8e8e8}
 .ct{width:921px;padding:.7px 0 0 3.700px;display:flex;flex-direction:column;gap:4.400px}
 .cols{display:flex;align-items:flex-start;gap:4.750px;padding-left:2.300px}
 .sb{width:5px;background:#e4e4e4}.sb i{display:block;border-radius:1px}`,
 el=>{
  const a=n=>el.getAttribute(n),k=a('shot'),s=SHOT[k];
  el.style.width=a('w')+'px';
  return `<div class="w" style="transform:translate(${a('x')}px,${a('y')}px) scale(${a('scale')})"><ubuntu-dock></ubuntu-dock><div class="m"><browser-chrome></browser-chrome>${s.menu?'<inventor-menu></inventor-menu>':''}<div class="pg"><div class="ct"><project-bar></project-bar><div class="cols"><component-palette shot="${k}" style="width:115.500px"></component-palette><designer-view shot="${k}" style="width:565.700px"></designer-view><component-tree shot="${k}" style="width:106.300px"></component-tree><property-list shot="${k}" style="width:106.300px"></property-list></div></div><div class="sb"><i style="background:${s.thumb[0]};margin-top:${s.thumb[1]}px;height:${s.thumb[2]}px"></i></div></div></div></div>`;
 });

/* ---------- red circles, arrows, numbers and brush marks ---------- */
const MARKS=[[29.3,94.2,137.5,95],[717.3,66.7,138.7,95],[815.7,208.9,139.3,95],[982,82.1,139,95.3],[982,133.9,139,95.3],[1776.7,338,139,95.500],[974.3,648.2,138.7,96.5],[976,732.7,138.7,95.500],[1684.3,712.4,139,96],[1776.7,879,139,96],[29.3,750.3,87.4,59.3],[858.3,903.6,87.4,59.3],[417,1001.8,87,59.6]];
define('step-overlay',`:host{font-family:"Open Sans",sans-serif}text{font-weight:700;font-size:110.500px;fill:#ff5757;text-anchor:middle}`,
 ()=>`<svg width="1920" height="1080" viewBox="0 0 1920 1080" fill="none">
 <defs><filter id="rough" x="-5%" y="-8%" width="110%" height="116%" color-interpolation-filters="sRGB"><feTurbulence type="fractalNoise" baseFrequency=".28" numOctaves="2" seed="4" result="n"/><feDisplacementMap in="SourceGraphic" in2="n" scale="4" xChannelSelector="R" yChannelSelector="G"/></filter>
 <symbol id="brush" viewBox="0 0 416 286" preserveAspectRatio="none" overflow="visible">
 <path fill="#ff5757" d="M212 0C240 4 268 14 290 24 320 34 350 48 372 68 392 88 408 116 414 146 418 176 412 200 396 220 380 236 358 246 336 256 310 264 290 270 270 272L256 274 240 272 222 284 205 276 190 282 170 277 150 286 135 279 120 282 98 270 85 274 68 256 52 254 40 236 26 232 20 214 8 206 4 182 0 165 6 140 5 128 18 112 26 96 48 82C60 72 100 62 128 60L160 57 200 56 235 59 262 65 240 69 225 68 200 72 180 69 160 74 130 77 108 83 90 87 66 98 60 108 44 118 40 130 30 142 32 158 24 172 30 180 34 194 48 206 58 222 82 230 100 236C150 250 200 252 240 246 280 240 320 226 350 208 376 192 388 172 386 148L378 130 366 112 352 98 340 84 322 72 308 62 290 54 282 44 262 34 250 22 230 14Z"/>
 <path stroke="#ff5757" stroke-width="4" stroke-dasharray="6 5 10 6 3 7" d="M262 65C276 66 284 68 298 71M250 71C262 71 270 72 282 76"/>
 <path stroke="#ffc4ba" stroke-width=".9" d="M8 130 24 160M60 245 84 216M150 282 138 252M222 274 206 250M340 254 322 232M396 150 414 178M366 96 376 74M100 64 108 84"/>
 </symbol></defs>
 ${MARKS.map(m=>`<g filter="url(#rough)"><svg x="${m[0]}" y="${m[1]}" width="${m[2]}" height="${m[3]}" overflow="visible"><use href="#brush" width="${m[2]}" height="${m[3]}"/></svg></g>`).join('')}
 <g stroke="#ff5757" stroke-width="9"><circle cx="474.200" cy="310.800" r="149.800"/><circle cx="1410" cy="310.800" r="149.500"/><circle cx="1412.200" cy="844.100" r="147.700"/><circle cx="480" cy="845.900" r="149.500"/></g>
 <g stroke="#ff5757" stroke-width="14" stroke-linejoin="round"><path d="M635 310.500H1240M1410 471.200V675M1249.700 843.800H645"/><g stroke-linecap="round"><path d="M1194.700 278.500 1242 310.500 1194.700 342.500"/><path d="M1377.300 630.300 1410 677 1442.700 630.300"/><path d="M690.700 811.700 642.500 843.800 690.700 875.900"/></g></g>
 <text x="474.800" y="351.900">1</text><text x="1410" y="351.900">2</text><text x="1412" y="884.300" dy="1.500">3</text><text x="480" y="886.800">4</text></svg>`);

define('tutorial-board',`
 :host{width:1920px;height:1080px;display:flex;flex-direction:column;gap:18.800px;position:relative;overflow:hidden}
 .r{display:flex;height:525.200px;flex:none}.r.b{height:536px}
 .o{position:absolute;inset:0}`,
 ()=>`<div class="r"><slot name="top"></slot></div><div class="r b"><slot name="bottom"></slot></div><div class="o"><slot name="over"></slot></div>`);
</script>
</body>
</html>
